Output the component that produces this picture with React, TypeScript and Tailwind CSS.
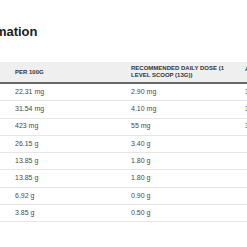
import React from "react";

const rows: [string, string, string][] = [
  ["22.31 mg", "2.90 mg", "36%"],
  ["31.54 mg", "4.10 mg", "34%"],
  ["423 mg", "55 mg", "37%"],
  ["26.15 g", "3.40 g", ""],
  ["13.85 g", "1.80 g", ""],
  ["13.85 g", "1.80 g", ""],
  ["6.92 g", "0.90 g", ""],
  ["3.85 g", "0.50 g", ""],
];

export default function App() {
  return (
    <div
      className="w-[247px] h-[247px] overflow-hidden bg-white"
      style={{ fontFamily: '"Liberation Sans", Arial, sans-serif' }}
    >
      <div className="pt-[23px] h-[62px] overflow-hidden">
        <h2 className="-ml-[34px] text-[13px] leading-[18px] font-bold text-[#222] whitespace-nowrap">
          Information
        </h2>
      </div>
      <div className="w-[300px]">
        <div className="flex h-[22px] bg-[#efefef] border-b-2 border-[#666] text-[6px] leading-[7px] font-bold text-[#333] uppercase">
          <div className="w-[15px] shrink-0" />
          <div className="w-[116px] shrink-0 flex items-center">PER 100G</div>
          <div className="w-[114px] shrink-0 flex items-center pr-[20px]">
            Recommended daily dose (1 level scoop (13g))
          </div>
          <div className="flex-1 flex items-start pt-[4px]">ADULT NRV</div>
        </div>
        {rows.map((r, i) => (
          <div
            key={i}
            className="flex h-[17.3px] border-b border-[#e6e6e6] text-[7px] text-[#4a4a4a] items-center"
          >
            <div className="w-[15px] shrink-0" />
            <div className="w-[116px] shrink-0">{r[0]}</div>
            <div className="w-[114px] shrink-0">{r[1]}</div>
            <div className="flex-1">{r[2]}</div>
          </div>
        ))}
      </div>
    </div>
  );
}
